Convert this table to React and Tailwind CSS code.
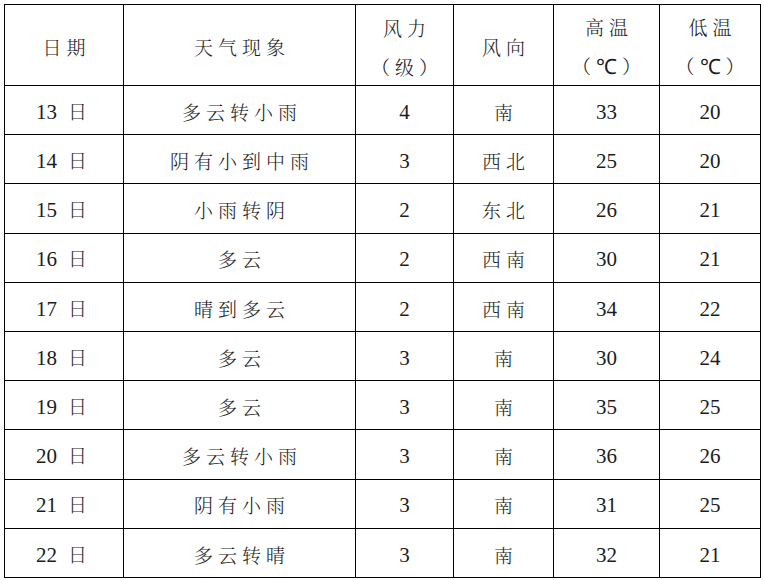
import React from "react";

const rows = [
  ["13", "多云转小雨", "4", "南", "33", "20"],
  ["14", "阴有小到中雨", "3", "西北", "25", "20"],
  ["15", "小雨转阴", "2", "东北", "26", "21"],
  ["16", "多云", "2", "西南", "30", "21"],
  ["17", "晴到多云", "2", "西南", "34", "22"],
  ["18", "多云", "3", "南", "30", "24"],
  ["19", "多云", "3", "南", "35", "25"],
  ["20", "多云转小雨", "3", "南", "36", "26"],
  ["21", "阴有小雨", "3", "南", "31", "25"],
  ["22", "多云转晴", "3", "南", "32", "21"],
];

const cjk = "[font-family:'Noto_Serif_CJK_SC','Noto_Sans_CJK_SC',sans-serif] font-light tracking-[5px] pl-[5px]";
const num = "[font-family:'Liberation_Serif',serif] text-[21px]";

const Cell = ({ children, className = "" }) => (
  <td className={`border border-black text-center align-middle p-0 ${className}`}>{children}</td>
);

export default function App() {
  return (
    <div className="bg-white w-[764px] h-[580px] pl-[4px] pt-[4px] text-[#1c1c1c]">
      <table className="border-collapse table-fixed w-[756px]">
        <colgroup>
          <col className="w-[119px]" />
          <col className="w-[232px]" />
          <col className="w-[98px]" />
          <col className="w-[100px]" />
          <col className="w-[106px]" />
          <col className="w-[101px]" />
        </colgroup>
        <thead>
          <tr className="h-[81px] text-[19px]">
            <Cell className="pt-[6px]"><span className={cjk}>日期</span></Cell>
            <Cell className="pt-[6px]"><span className={cjk}>天气现象</span></Cell>
            <Cell>
              <div className="leading-[39px] translate-y-[2px]">
                <div className={cjk}>风力</div>
                <div className={cjk}>（级）</div>
              </div>
            </Cell>
            <Cell className="pt-[6px]"><span className={cjk}>风向</span></Cell>
            <Cell>
              <div className="leading-[39px] translate-y-[2px]">
                <div className={cjk}>高温</div>
                <div className={`${cjk} tracking-[2px]`}>（<span className={num}>℃</span>）</div>
              </div>
            </Cell>
            <Cell>
              <div className="leading-[39px] translate-y-[2px]">
                <div className={cjk}>低温</div>
                <div className={`${cjk} tracking-[2px]`}>（<span className={num}>℃</span>）</div>
              </div>
            </Cell>
          </tr>
        </thead>
        <tbody>
          {rows.map((r) => (
            <tr key={r[0]} className="h-[49.2px] text-[19px]">
              <Cell className="pt-[5px]">
                <span className={num}>{r[0]}</span>
                <span className={`${cjk} ml-[6px]`}>日</span>
              </Cell>
              <Cell className="pt-[5px]"><span className={cjk}>{r[1]}</span></Cell>
              <Cell className="pt-[5px]"><span className={num}>{r[2]}</span></Cell>
              <Cell className="pt-[5px]"><span className={cjk}>{r[3]}</span></Cell>
              <Cell className="pt-[5px]"><span className={num}>{r[4]}</span></Cell>
              <Cell className="pt-[5px]"><span className={num}>{r[5]}</span></Cell>
            </tr>
          ))}
        </tbody>
      </table>
    </div>
  );
}
